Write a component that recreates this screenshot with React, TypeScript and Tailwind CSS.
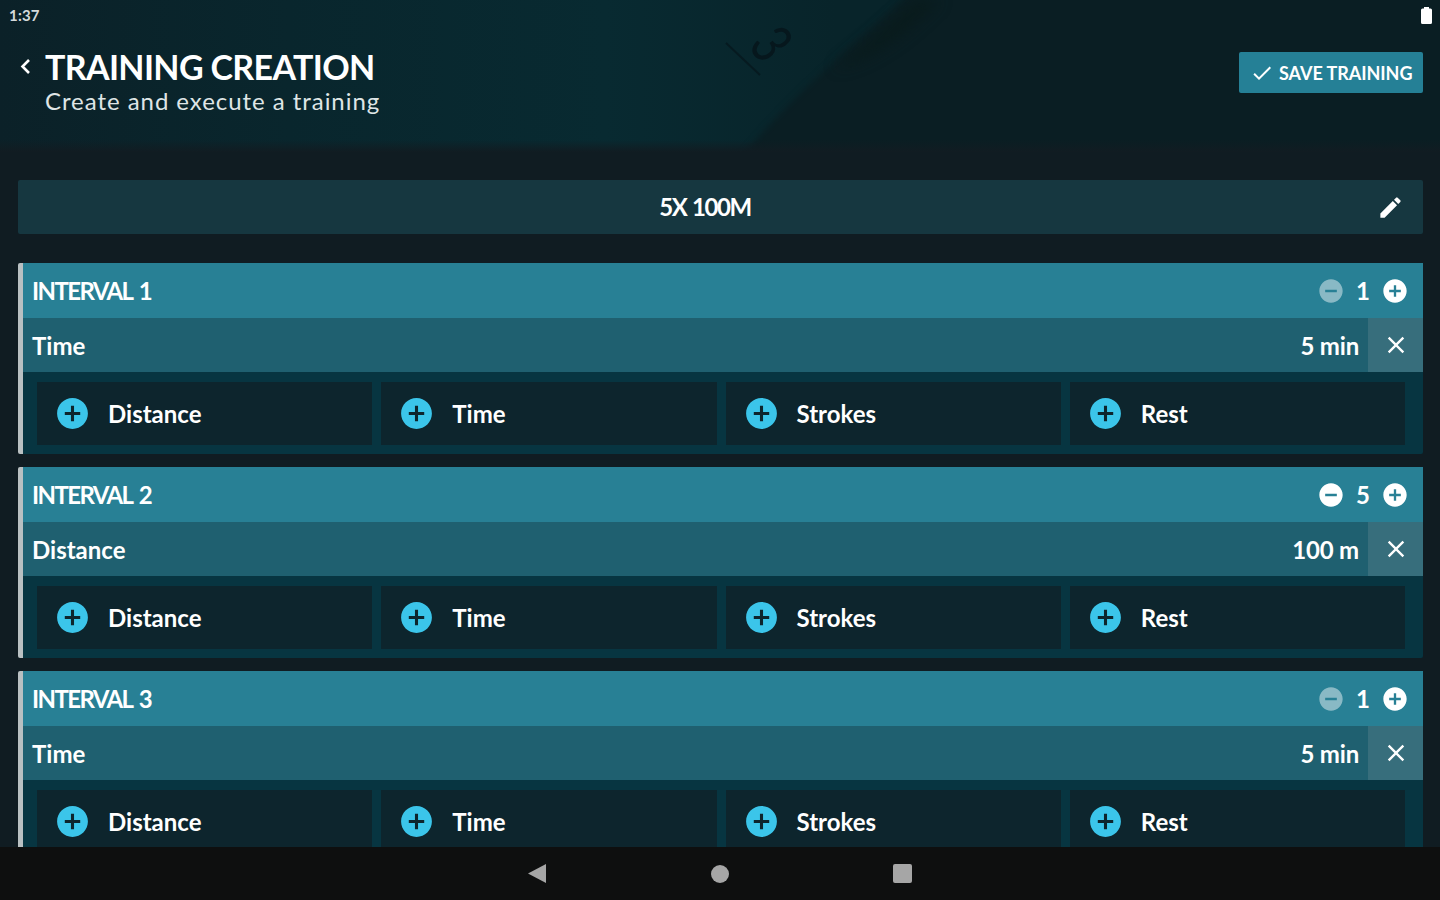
import React, { useState } from 'react';
import { MdAddCircle, MdCheck, MdClose, MdEdit, MdRemoveCircle } from 'react-icons/md';

interface Interval {
  id: number;
  kind: string;
  value: string;
  repeats: number;
}

const initialIntervals: Interval[] = [
  { id: 1, kind: 'Time', value: '5 min', repeats: 1 },
  { id: 2, kind: 'Distance', value: '100 m', repeats: 5 },
  { id: 3, kind: 'Time', value: '5 min', repeats: 1 },
];

const stepTypes = ['Distance', 'Time', 'Strokes', 'Rest'];

// Tape measure backdrop behind the header
const HeaderBackdrop: React.FC = () => (
  <svg className="absolute inset-0 h-full w-full" viewBox="0 0 1440 152" preserveAspectRatio="none" aria-hidden="true">
    <defs>
      <linearGradient id="base" x1="0" y1="0" x2="1" y2="0">
        <stop offset="0" stopColor="#0b2128" />
        <stop offset="0.2" stopColor="#09262d" />
        <stop offset="0.42" stopColor="#082a31" />
        <stop offset="0.58" stopColor="#08242a" />
        <stop offset="1" stopColor="#08242a" />
      </linearGradient>
      <linearGradient id="fade" x1="0" y1="0" x2="0" y2="1">
        <stop offset="0.92" stopColor="#111c22" stopOpacity="0" />
        <stop offset="1" stopColor="#111c22" />
      </linearGradient>
      <filter id="soft" colorInterpolationFilters="sRGB">
        <feGaussianBlur stdDeviation="3" />
      </filter>
      <filter id="softer" x="-50%" y="-50%" width="200%" height="200%" colorInterpolationFilters="sRGB">
        <feGaussianBlur stdDeviation="7" />
      </filter>
    </defs>
    <rect width="1440" height="152" fill="url(#base)" />
    <path d="M912 -10 C860 42 800 85 735 165 H1480 V-10Z" fill="#0a1e23" filter="url(#soft)" />
    <path d="M915 0 C885 28 855 52 835 68 C870 60 900 40 940 0Z" fill="#091b1c" filter="url(#softer)" />
    <path d="M726 43 L760 75" stroke="#061a20" strokeWidth="2" />
    <text
      transform="translate(771 44) rotate(55)"
      textAnchor="middle"
      y="20"
      fontSize="58"
      fontFamily="Lato, sans-serif"
      fill="#06171d"
      textLength="25"
      lengthAdjust="spacingAndGlyphs"
    >
      3
    </text>
    <rect width="1440" height="152" fill="url(#fade)" />
  </svg>
);

const StatusBar: React.FC = () => (
  <div className="flex h-[30px] items-center justify-between pl-[9px] pr-2">
    <span className="text-[15px] font-bold leading-none tracking-[0.2px] text-[#d5dadb]">1:37</span>
    <svg className="h-[17px] w-[11px]" viewBox="0 0 11 17" fill="white">
      <path d="M3 0h5v1.500h1.500q1.500 0 1.500 1.500v12.500q0 1.500-1.500 1.500h-8q-1.500 0-1.500-1.500v-12.500q0-1.500 1.500-1.500h1.500z" />
    </svg>
  </div>
);

const Header: React.FC = () => (
  <header className="relative h-[152px] shrink-0">
    <HeaderBackdrop />
    <div className="relative">
      <StatusBar />
      <div className="flex items-start pl-5 pr-[17px] pt-[17px]">
        <button className="mt-[11px] w-[25px]" aria-label="Back">
          <svg className="h-[17px] w-[11px]" viewBox="0 0 11 17" fill="none" stroke="white" strokeWidth="2.6">
            <path d="M9 2 2.500 8.500 9 15" />
          </svg>
        </button>
        <div className="flex-1">
          <h1 className="text-[34px] font-bold leading-[40px] tracking-[-0.65px]">TRAINING CREATION</h1>
          <p className="text-[24px] leading-[28px] tracking-[0.95px] text-[#dfe5e6]">Create and execute a training</p>
        </div>
        <button className="mt-[5px] flex h-[41px] w-[184px] items-center whitespace-nowrap rounded-[2px] bg-[#258096] pl-[11px]">
          <MdCheck className="mr-[5px] size-6" />
          <span className="pt-px text-[18px] font-bold tracking-[-0.05px]">SAVE TRAINING</span>
        </button>
      </div>
    </div>
  </header>
);

const IntervalCard: React.FC<{
  interval: Interval;
  onRepeat: (delta: number) => void;
}> = ({ interval, onRepeat }) => (
  <section className="mb-[13px] h-[191px] shrink-0 rounded-[2px] border-l-[5px] border-[#b9c0c2] bg-[#073541]">
    <div className="flex h-[55px] items-center bg-[#288095] pl-[9px] pr-[14px]">
      <h2 className="flex-1 text-[24px] font-bold tracking-[-1.6px] [word-spacing:3px]">INTERVAL {interval.id}</h2>
      <button disabled={interval.repeats <= 1} onClick={() => onRepeat(-1)} className="disabled:opacity-45" aria-label="Less">
        <MdRemoveCircle className="size-7" />
      </button>
      <span className="w-9 text-center text-[24px] font-bold">{interval.repeats}</span>
      <button onClick={() => onRepeat(1)} aria-label="More">
        <MdAddCircle className="size-7" />
      </button>
    </div>
    <div className="flex h-[54px] items-center bg-[#1f6070] pl-[9px]">
      <span className="flex-1 pt-0.5 text-[24px] font-bold">{interval.kind}</span>
      <span className="mr-[9px] pt-0.5 text-[24px] font-bold tracking-[-0.2px]">{interval.value}</span>
      <button className="flex h-full w-[55px] items-center justify-center bg-[#376e7c]" aria-label="Remove">
        <MdClose className="size-7" />
      </button>
    </div>
    <div className="grid grid-cols-4 gap-[9px] pb-[9px] pl-[14px] pr-[18px] pt-[10px]">
      {stepTypes.map((step) => (
        <button key={step} className="flex h-[63px] items-center bg-[#0d252d] pl-[17px]">
          <MdAddCircle className="mr-[17px] size-[37px] text-[#3bc5ea]" />
          <span className="text-[24px] font-bold">{step}</span>
        </button>
      ))}
    </div>
  </section>
);

// Android system navigation
const NavigationBar: React.FC = () => (
  <nav className="flex h-[53px] shrink-0 items-center justify-center gap-[164px] bg-[#0e0f0f] text-[#a6a6a6]">
    <svg className="size-[19px]" viewBox="0 0 19 19" fill="currentColor">
      <path d="M0 9.500 18 0V19Z" />
    </svg>
    <div className="size-[18px] rounded-full bg-current" />
    <div className="size-[19px] rounded-[2px] bg-current" />
  </nav>
);

const App: React.FC = () => {
  const [intervals, setIntervals] = useState(initialIntervals);

  const changeRepeats = (id: number, delta: number) => {
    setIntervals((list) => list.map((it) => (it.id === id ? { ...it, repeats: it.repeats + delta } : it)));
  };

  return (
    <div className="flex h-[900px] w-[1440px] flex-col overflow-hidden bg-[#101c22] font-[Lato,'Open_Sans',sans-serif] text-white">
      <Header />
      <main className="flex min-h-0 flex-1 flex-col overflow-hidden pl-[18px] pr-[17px] pt-7">
        <div className="mb-[29px] flex h-[54px] shrink-0 items-center rounded-[2px] bg-[#163740] pr-[19px]">
          <span className="flex-1 pl-[15px] text-center text-[24px] font-bold tracking-[-1.4px] [word-spacing:1px]">5X 100M</span>
          <button aria-label="Edit name">
            <MdEdit className="size-[27px]" />
          </button>
        </div>
        {intervals.map((interval) => (
          <IntervalCard
            key={interval.id}
            interval={interval}
            onRepeat={(delta) => changeRepeats(interval.id, delta)}
          />
        ))}
      </main>
      <NavigationBar />
    </div>
  );
};

export default App;
